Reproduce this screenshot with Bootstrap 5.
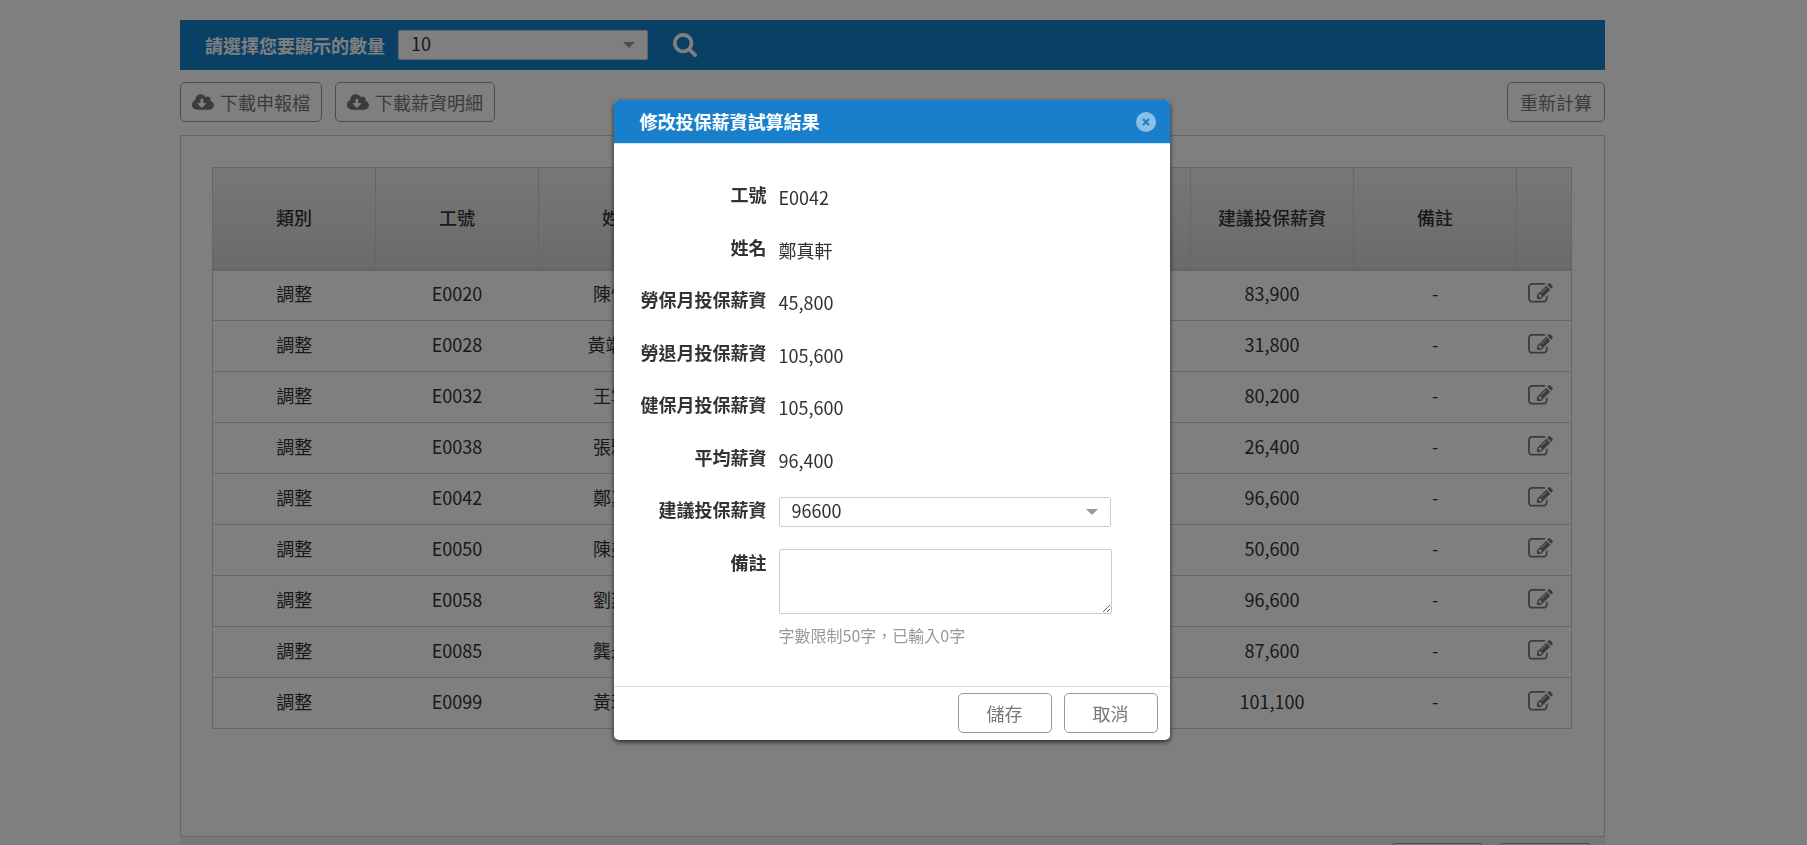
<!DOCTYPE html>
<html lang="zh-Hant">
<head>
<meta charset="utf-8">
<meta name="viewport" content="width=device-width, initial-scale=1">
<title>投保薪資試算</title>
<link rel="stylesheet" href="https://cdn.jsdelivr.net/npm/bootstrap@5.3.0/dist/css/bootstrap.min.css">
<style>
  body { font-family: "Noto Sans CJK TC", "Noto Sans", sans-serif; font-size: 18px; color: #333; overflow: hidden; }
  .page-gutter { padding-right: 22px; }
  .shell { width: 80%; max-width: 1425px; }
  .brand-bar { background: #1780cd; min-height: 50px; padding: 0 25px; gap: 13px; }
  .brand-bar label { font-weight: 700; }
  .brand-bar .icon-btn { margin: 0 12px; }
  .pick {
    appearance: none; height: 30px; padding: 0 32px 4px 12px; line-height: 25px; color: #333;
    border: 1px solid #ccc; border-radius: 2px;
    background: #fff url("data:image/svg+xml,%3Csvg xmlns='http://www.w3.org/2000/svg' viewBox='0 0 12 6'%3E%3Cpath d='M0 0h12L6 6z' fill='%23999'/%3E%3C/svg%3E") no-repeat right 12px center / 12px 6px;
  }
  .pick-count { width: 250px; }
  .icon-btn { border: 0; background: none; padding: 0; line-height: 1; color: inherit; }
  .btn-line {
    --bs-btn-color: #777; --bs-btn-border-color: #999; --bs-btn-font-size: 18px; --bs-btn-border-radius: 5px;
    --bs-btn-padding-x: 12px; --bs-btn-padding-y: 0;
    height: 40px; background: #fff;
  }
  .btn-icon { --bs-btn-padding-x: 11px; gap: 6px; }
  .toolbar { padding: 12px 0 13px; }
  .toolbar .btn-icon { margin-right: 13px; }
  .panel { border: 1px solid #ccc; padding: 31px 32px 107px 31px; }
  .wage-table { --bs-table-color: #333; border: 1px solid #ccc; table-layout: fixed; text-align: center; }
  .wage-table thead { background: linear-gradient(#efefef, #d5d5d5); }
  .wage-table th { height: 102px; font-weight: 500; background: none; border-right: 1px solid #ccc; border-bottom: 2px solid #ccc; vertical-align: middle; padding: 0 0 2px; }
  .wage-table td { height: 51px; padding: 0 0 3px; border-bottom: 1px solid #ccc; vertical-align: middle; }
  .wage-table .col-edit { width: 55px; }
  .wage-table .icon-btn { display: block; margin: 0 auto 4px 11px; color: #777; }
  .page-foot { background: #efefef; padding: 6px 13px; gap: 14px; }
  .page-foot .btn { width: 94px; }
  .dialog-gutter { padding-right: 24px; }
  .dialog-shell { max-width: 556px; margin: 100px auto 0; }
  .dialog-card { border: 0; border-radius: 5px; box-shadow: 0 2px 5px rgba(0, 0, 0, .7); }
  .dialog-head { background: #177fcc; color: #fff; height: 44px; padding: 0 14px 0 26px; border-bottom: 1px solid #cce5f6; border-radius: 5px 5px 0 0; }
  .dialog-head h1 { font-size: 18px; font-weight: 700; }
  .dialog-close { width: 20px; height: 20px; border-radius: 50%; background: #8bbfe6; color: #177fcc; }
  .dialog-body { padding: 37px 0 39px; }
  .field { display: grid; grid-template-columns: 153px 333px; column-gap: 12px; align-items: start; min-height: 53px; line-height: 26px; }
  .field:nth-child(even) { min-height: 52px; }
  .field > label, .field > .name { font-weight: 700; text-align: right; }
  .field > .value { padding-top: 3px; }
  .field > .pick { width: 332px; margin-top: 1px; }
  .memo textarea { width: 333px; height: 65px; border: 1px solid #ccc; border-radius: 2px; display: block; }
  .hint { font-size: 16px; color: #999; line-height: 24px; margin-top: 9px; }
  .dialog-foot { border-top: 1px solid #ddd; padding: 6px 12px 7px; gap: 12px; }
  .dialog-foot .btn { width: 94px; }
</style>
</head>
<body>
<svg class="d-none" xmlns="http://www.w3.org/2000/svg">
  <symbol id="i-search" viewBox="64 128 1664 1664"><path fill="currentColor" d="M1216 832q0-185-131.500-316.500t-316.500-131.500-316.500 131.500-131.500 316.500 131.500 316.500 316.500 131.500 316.500-131.500 131.500-316.500zm512 832q0 52-38 90t-90 38q-54 0-90-38l-343-342q-179 124-399 124-143 0-273.500-55.500t-225-150-150-225-55.500-273.500 55.500-273.500 150-225 225-150 273.500-55.500 273.500 55.500 225 150 150 225 55.500 273.500q0 220-124 399l343 343q37 37 37 90z"/></symbol>
  <symbol id="i-cloud" viewBox="0 0 640 512"><path fill="currentColor" d="M537.600 226.600c4.100-10.700 6.400-22.400 6.400-34.600 0-53-43-96-96-96-19.700 0-38.100 6-53.300 16.200C367 64.200 315.300 32 256 32c-88.400 0-160 71.600-160 160 0 2.700.1 5.400.2 8.100C40.200 219.800 0 273.200 0 336c0 79.500 64.500 144 144 144h368c70.700 0 128-57.300 128-128 0-61.900-44-113.600-102.400-125.400zm-132.900 88.700L299.300 420.700c-6.200 6.200-16.400 6.200-22.600 0L171.300 315.300c-10.100-10.100-2.900-27.300 11.300-27.300H248V176c0-8.800 7.200-16 16-16h48c8.800 0 16 7.200 16 16v112h65.400c14.200 0 21.400 17.200 11.300 27.300z"/></symbol>
  <symbol id="i-edit" viewBox="0 128 1792 1440"><path fill="currentColor" d="M888 1184l116-116-152-152-116 116v56h96v96h56zm440-720q-16-16-33 1l-350 350q-17 17-1 33t33-1l350-350q17-17 1-33zm80 594v190q0 119-84.500 203.500t-203.500 84.500h-832q-119 0-203.500-84.500t-84.500-203.500v-832q0-119 84.500-203.500t203.500-84.500h832q63 0 117 25 15 7 18 23 3 17-9 29l-49 49q-14 14-32 8-23-6-45-6h-832q-66 0-113 47t-47 113v832q0 66 47 113t113 47h832q66 0 113-47t47-113v-126q0-13 9-22l64-64q15-15 35-7t20 29zm-96-738l288 288-672 672h-288v-288zm444 132l-92 92-288-288 92-92q28-28 68-28t68 28l152 152q28 28 28 68t-28 68z"/></symbol>
</svg>

<div class="page-gutter">
  <main class="shell mx-auto pt-3">
    <form class="brand-bar d-flex align-items-center text-white mt-1">
      <label for="count">請選擇您要顯示的數量</label>
      <select id="count" class="pick pick-count"><option>10</option></select>
      <button type="button" class="icon-btn" aria-label="搜尋"><svg class="d-block" width="24" height="24"><use href="#i-search"/></svg></button>
    </form>

    <div class="d-flex toolbar">
      <button type="button" class="btn btn-line btn-icon d-flex align-items-center"><svg width="22" height="18"><use href="#i-cloud"/></svg>下載申報檔</button>
      <button type="button" class="btn btn-line btn-icon d-flex align-items-center"><svg width="22" height="18"><use href="#i-cloud"/></svg>下載薪資明細</button>
      <button type="button" class="btn btn-line ms-auto">重新計算</button>
    </div>

    <section class="panel">
      <table class="table wage-table mb-0">
        <thead>
          <tr><th>類別</th><th>工號</th><th>姓名</th><th></th><th></th><th></th><th>建議投保薪資</th><th>備註</th><th class="col-edit" aria-label="編輯"></th></tr>
        </thead>
        <tbody id="rows"></tbody>
      </table>
    </section>
    <footer class="page-foot d-flex justify-content-end">
      <button type="button" class="btn btn-line" aria-label="上一步"></button>
      <button type="button" class="btn btn-line" aria-label="下一步"></button>
    </footer>
  </main>
</div>

<div class="modal-backdrop show"></div>
<div class="modal d-block dialog-gutter" role="dialog" aria-labelledby="dlg-title">
  <div class="modal-dialog dialog-shell">
    <div class="modal-content dialog-card">
      <div class="dialog-head d-flex align-items-center justify-content-between">
        <h1 id="dlg-title" class="mb-0">修改投保薪資試算結果</h1>
        <button type="button" class="icon-btn dialog-close d-flex align-items-center justify-content-center" aria-label="關閉"><svg width="8" height="8" viewBox="0 0 8 8"><path d="M1 1l6 6M7 1L1 7" stroke="currentColor" stroke-width="2"/></svg></button>
      </div>
      <form class="dialog-body">
        <div class="field"><span class="name">工號</span><span class="value">E0042</span></div>
        <div class="field"><span class="name">姓名</span><span class="value">鄭真軒</span></div>
        <div class="field"><span class="name">勞保月投保薪資</span><span class="value">45,800</span></div>
        <div class="field"><span class="name">勞退月投保薪資</span><span class="value">105,600</span></div>
        <div class="field"><span class="name">健保月投保薪資</span><span class="value">105,600</span></div>
        <div class="field"><span class="name">平均薪資</span><span class="value">96,400</span></div>
        <div class="field"><label for="wage">建議投保薪資</label><select id="wage" class="pick"><option>96600</option></select></div>
        <div class="field"><label for="memo">備註</label><div class="memo"><textarea id="memo"></textarea><div class="hint">字數限制50字，已輸入0字</div></div></div>
      </form>
      <div class="dialog-foot d-flex justify-content-end">
        <button type="button" class="btn btn-line">儲存</button>
        <button type="button" class="btn btn-line">取消</button>
      </div>
    </div>
  </div>
</div>

<script src="https://cdn.jsdelivr.net/npm/bootstrap@5.3.0/dist/js/bootstrap.bundle.min.js"></script>
<script>
  const people = [
    ["E0020", "陳怡君", "83,900"], ["E0028", "黃端儀A", "31,800"], ["E0032", "王雲平", "80,200"],
    ["E0038", "張雅文", "26,400"], ["E0042", "鄭真軒", "96,600"], ["E0050", "陳美玲", "50,600"],
    ["E0058", "劉燕玉", "96,600"], ["E0085", "龔永安", "87,600"], ["E0099", "黃琪雯", "101,100"]
  ];
  document.getElementById("rows").innerHTML = people.map(([id, name, wage]) =>
    `<tr><td>調整</td><td>${id}</td><td>${name}</td><td></td><td></td><td></td><td>${wage}</td><td>-</td>
     <td><button type="button" class="icon-btn" aria-label="編輯 ${id}"><svg width="25" height="20"><use href="#i-edit"/></svg></button></td></tr>`).join("");
</script>
</body>
</html>
